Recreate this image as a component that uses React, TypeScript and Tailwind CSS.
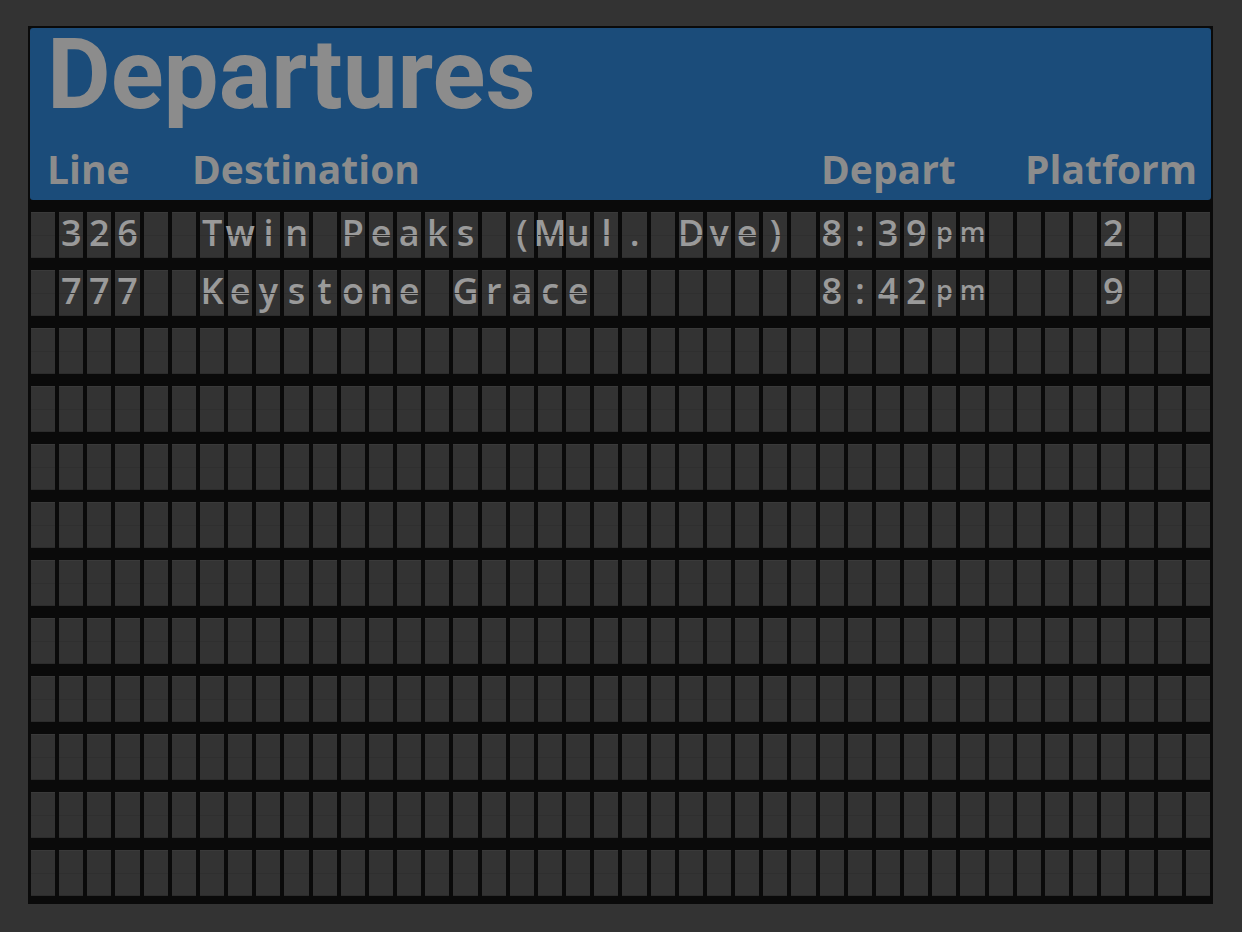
import React from 'react';

const COLS = 42;

type Seg = { at: number; text: string; small?: boolean };

const rows: Seg[][] = [
  [
    { at: 1, text: '326' },
    { at: 6, text: 'Twin Peaks (Mul. Dve)' },
    { at: 28, text: '8:39' },
    { at: 32, text: 'pm', small: true },
    { at: 38, text: '2' },
  ],
  [
    { at: 1, text: '777' },
    { at: 6, text: 'Keystone Grace' },
    { at: 28, text: '8:42' },
    { at: 32, text: 'pm', small: true },
    { at: 38, text: '9' },
  ],
];

const TOTAL_ROWS = 12;

function buildRow(segs: Seg[]) {
  const cells: { ch: string; small: boolean }[] = Array.from({ length: COLS }, () => ({ ch: '', small: false }));
  segs.forEach((s) => {
    s.text.split('').forEach((ch, i) => {
      if (s.at + i < COLS) cells[s.at + i] = { ch: ch === ' ' ? '' : ch, small: !!s.small };
    });
  });
  return cells;
}

const Flap: React.FC<{ ch: string; small: boolean }> = ({ ch, small }) => (
  <div className="relative flex h-[46px] items-center justify-center bg-[#333333] pb-[4px] shadow-[inset_0_1px_0_#3a3a3a,inset_0_-1px_0_#2c2c2c]">
    <span
      className={
        small
          ? 'mb-[3px] text-[27px] font-semibold leading-none text-[#9a9a9a]'
          : 'text-[36px] font-semibold leading-none text-[#9a9a9a]'
      }
    >
      {ch}
    </span>
    <div className="absolute inset-x-0 top-1/2 h-px bg-[#2f2f2f]" />
  </div>
);

export default function App() {
  const allRows = Array.from({ length: TOTAL_ROWS }, (_, i) => buildRow(rows[i] ?? []));
  return (
    <div className="min-h-[932px] w-full bg-[#333333] pt-[26px] pl-[28px]" style={{ fontFamily: '"Open Sans", "Liberation Sans", sans-serif' }}>
      <div className="flex w-[1185px] flex-col bg-[#0a0a0a] p-[2px] pb-[8px]">
        <div className="flex h-[172px] flex-col rounded-[3px] bg-[#1b4c7a] pl-[17px] text-[#8c8c8c]">
          <h1 className="-mt-[2px] font-['Roboto'] text-[98px] font-bold leading-none">Departures</h1>
          <div className="mt-auto mb-[12px] flex items-end text-[39px] font-bold leading-none">
            <div className="w-[145px]">Line</div>
            <div className="w-[629px]">Destination</div>
            <div className="w-[204px]">Depart</div>
            <div>Platform</div>
          </div>
        </div>
        <div className="mt-[12px] flex flex-col gap-[12px]">
          {allRows.map((cells, r) => (
            <div key={r} className="grid grid-cols-[repeat(42,minmax(0,1fr))] gap-x-[4px] px-[1px]">
              {cells.map((c, i) => (
                <Flap key={i} ch={c.ch} small={c.small} />
              ))}
            </div>
          ))}
        </div>
      </div>
    </div>
  );
}
